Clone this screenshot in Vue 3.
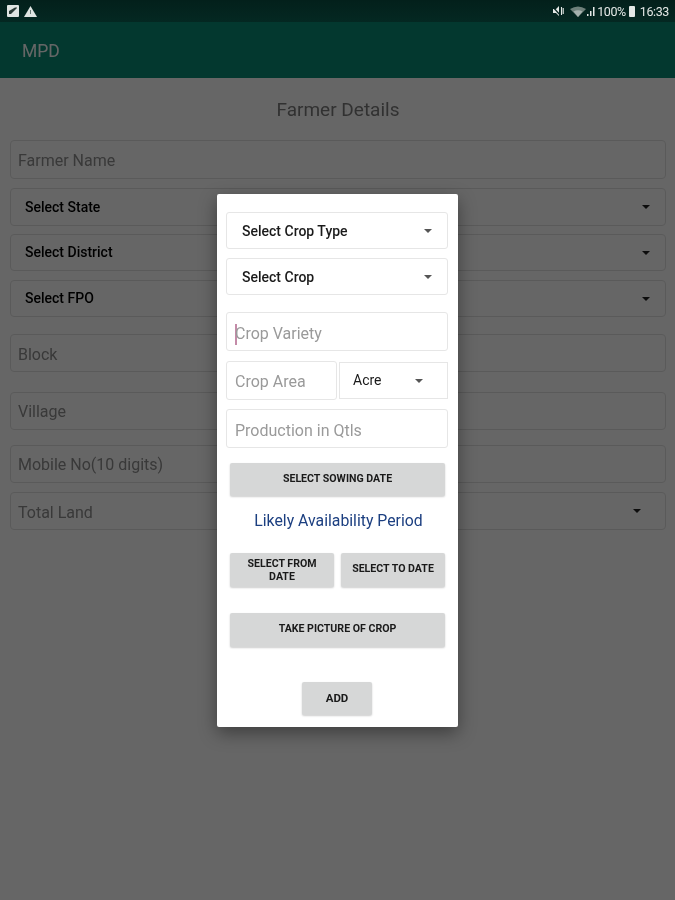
<template>
  <div class="page">
    <div class="status-bar">
      <div class="status-left">
        <svg class="icon-image" viewBox="0 0 12 12" width="12" height="12">
          <rect width="12" height="12" rx="1" fill="#dfe4e2" />
          <path d="M2 9 L2 6 L8 2.5 H10 V3 L4 9 Z" fill="#2a3a36" />
        </svg>
        <svg viewBox="0 0 13 11" width="13" height="11">
          <path d="M6.5 0 L13 11 H0 Z" fill="#dfe4e2" />
          <rect x="6" y="4" width="1" height="4" fill="#6a7a76" />
        </svg>
      </div>
      <div class="status-right">
        <svg class="icon-mute" viewBox="0 0 12 12" width="12" height="12">
          <path d="M1 4 H4 L7 1 V11 L4 8 H1 Z" fill="#e4e8e6" />
          <path d="M0 1 L9 11" stroke="#04231f" stroke-width="1.2" />
          <path d="M9.5 2 V10 M11.2 3 V9" stroke="#e4e8e6" stroke-width="1.1" />
        </svg>
        <svg class="icon-wifi" viewBox="0 0 16 11" width="16" height="11">
          <path d="M0 3 Q8 -2 16 3 L8 11 Z" fill="#6f807b" />
          <path d="M3.5 5.5 Q8 3 12.5 5.5 L8 11 Z" fill="#a5b1ae" />
        </svg>
        <svg class="icon-signal" viewBox="0 0 9 11" width="9" height="11">
          <rect x="0" y="8" width="1.5" height="2" fill="#e4e8e6" />
          <rect x="3" y="5" width="1.5" height="5" fill="#e4e8e6" />
          <rect x="6" y="1" width="1.5" height="9" fill="#e4e8e6" />
        </svg>
        <span class="status-text">100%</span>
        <span class="battery"></span>
        <span class="status-text clock">16:33</span>
      </div>
    </div>

    <div class="screen">
      <header class="app-bar">MPD</header>

      <main class="form">
        <h1 class="title">Farmer Details</h1>

        <div class="field first">Farmer Name</div>
        <div class="field select mt-9">Select State<span class="arrow"></span></div>
        <div class="field select short mt-8">Select District<span class="arrow"></span></div>
        <div class="field select short mt-9">Select FPO<span class="arrow"></span></div>
        <div class="field block mt-17">Block</div>
        <div class="field mt-20">Village</div>
        <div class="field mt-15">Mobile No(10 digits)</div>
        <div class="field land mt-9">Total Land<span class="arrow"></span></div>
      </main>

      <div class="scrim">
        <div class="dialog">
          <div class="box select">Select Crop Type<span class="arrow"></span></div>
          <div class="box select mt-9">Select Crop<span class="arrow"></span></div>
          <div class="box input mt-17"><span class="caret"></span>Crop Variety</div>

          <div class="area-row">
            <div class="box input area">Crop Area</div>
            <div class="box select unit">Acre<span class="arrow"></span></div>
          </div>

          <div class="box input">Production in Qtls</div>

          <button class="btn wide sowing">Select Sowing Date</button>
          <div class="period">Likely Availability Period</div>

          <div class="date-row">
            <button class="btn from">Select From Date</button>
            <button class="btn">Select To Date</button>
          </div>

          <button class="btn wide picture">Take Picture of Crop</button>
          <button class="btn add">Add</button>
        </div>
      </div>
    </div>
  </div>
</template>

<script setup>
</script>

<style>
html,
body {
  margin: 0;
  background: #666;
}
</style>

<style scoped>
.page {
  width: 675px;
  height: 900px;
  overflow: hidden;
  display: flex;
  flex-direction: column;
  font-family: Roboto, "Liberation Sans", sans-serif;
  filter: blur(0.6px);
}

.status-bar {
  height: 22px;
  flex: none;
  display: flex;
  align-items: center;
  justify-content: space-between;
  padding: 0 6px 0 7px;
  background: linear-gradient(#03201b, #042822);
  color: #e4e8e6;
}

.status-left,
.status-right {
  display: flex;
  align-items: center;
}

.status-left svg + svg {
  margin-left: 5px;
}

.icon-wifi {
  margin-left: 6px;
}

.icon-signal {
  margin-left: 1px;
}

.status-text {
  font-size: 12.5px;
  letter-spacing: -0.4px;
  margin-left: 1px;
}

.battery {
  width: 6px;
  height: 11px;
  margin-left: 3px;
  border-radius: 1px;
  background: #e4e8e6;
}

.clock {
  margin-left: 5px;
}

.screen {
  position: relative;
  flex: 1;
  background: #fff;
}

.app-bar {
  height: 56px;
  padding-left: 22px;
  line-height: 58px;
  font-size: 17.5px;
  color: #fff;
  background: #088c76;
}

.form {
  padding: 0 9px 0 10px;
}

.title {
  margin: 0;
  height: 62px;
  line-height: 63px;
  text-align: center;
  font-size: 19px;
  font-weight: 400;
  color: #7c7c7c;
}

.field {
  position: relative;
  box-sizing: border-box;
  height: 38px;
  line-height: 38px;
  padding-left: 7px;
  border: 1px solid #e2e2e2;
  border-radius: 4px;
  font-size: 16px;
  color: #8e8e8e;
}

.field.first {
  height: 39px;
  line-height: 39px;
}

.field.block {
  line-height: 39px;
}

.field.select {
  line-height: 36px;
  padding-left: 14px;
  font-size: 14px;
  font-weight: 500;
  color: #000;
}

.field.short {
  height: 37px;
  line-height: 35px;
}

.field.land {
  padding-left: 7px;
  line-height: 39px;
}

.arrow {
  position: absolute;
  top: 50%;
  right: 15px;
  margin-top: -2px;
  border-style: solid;
  border-width: 4px 4.5px 0;
  border-color: #222 transparent transparent;
}

.field.land .arrow {
  right: 24px;
}

.scrim {
  position: absolute;
  inset: 0;
  display: flex;
  justify-content: center;
  align-items: flex-start;
  padding-top: 172px;
  background: rgba(0, 0, 0, 0.6);
}

.dialog {
  box-sizing: border-box;
  width: 241px;
  height: 533px;
  padding: 18px 10px 0 9px;
  border-radius: 2px;
  background: #fff;
  box-shadow: 0 6px 18px rgba(0, 0, 0, 0.4);
}

.box {
  position: relative;
  box-sizing: border-box;
  border: 1px solid #e6e6e6;
  border-radius: 3px;
  color: #9a9a9a;
}

.box.select {
  height: 37px;
  line-height: 37px;
  padding-left: 15px;
  font-size: 14px;
  font-weight: 500;
  color: #1a1a1a;
}

.box.select .arrow {
  right: 15px;
  border-top-color: #555;
}

.box.input {
  height: 39px;
  line-height: 41px;
  padding-left: 8px;
  font-size: 16px;
}

.caret {
  display: inline-block;
  width: 2px;
  height: 21px;
  margin-right: -2px;
  vertical-align: middle;
  background: #c48ba8;
}

.area-row {
  display: flex;
  align-items: center;
  margin: 10px 0 9px;
}

.box.area {
  width: 111px;
  flex: none;
  line-height: 39px;
}

.box.unit {
  flex: 1;
  margin-left: 2px;
  padding-left: 13px;
  line-height: 35px;
  font-weight: 400;
  border-radius: 0;
}

.box.unit .arrow {
  right: 24px;
}

.btn {
  display: block;
  box-sizing: border-box;
  padding: 0 8px 2px;
  border: 0;
  border-radius: 2px;
  font-family: inherit;
  font-size: 10.6px;
  font-weight: 700;
  line-height: 12px;
  text-transform: uppercase;
  color: #1a1a1a;
  background: #d6d7d7;
  box-shadow: 0 1px 2px rgba(0, 0, 0, 0.2);
}

.wide {
  width: 215px;
  height: 33px;
  margin-left: 4px;
}

.sowing {
  margin-top: 15px;
}

.period {
  height: 49px;
  line-height: 50px;
  padding-left: 3px;
  text-align: center;
  font-size: 15.8px;
  color: #1c3f80;
}

.date-row {
  display: flex;
  gap: 7px;
  margin: 8px 0 0 4px;
  width: 215px;
}

.date-row .btn {
  width: 104px;
  height: 34px;
}

.date-row .from {
  padding-bottom: 0;
  line-height: 13px;
}

.picture {
  margin-top: 26px;
  height: 34px;
  padding-bottom: 2px;
}

.add {
  width: 70px;
  height: 33px;
  margin: 35px auto 0;
  font-size: 11.5px;
}

.mt-8 {
  margin-top: 8px;
}

.mt-9 {
  margin-top: 9px;
}

.mt-15 {
  margin-top: 15px;
}

.mt-17 {
  margin-top: 17px;
}

.mt-20 {
  margin-top: 20px;
}
</style>
